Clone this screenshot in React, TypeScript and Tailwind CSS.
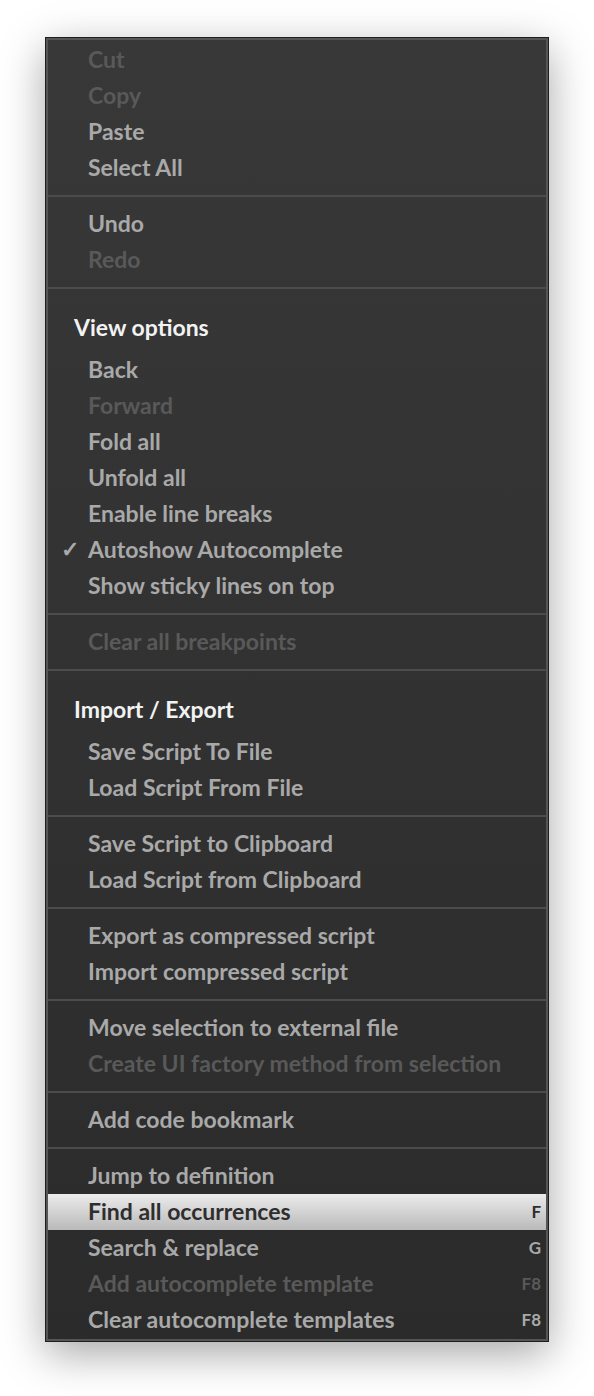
import React from "react";

type Item =
  | { kind: "item"; label: string; disabled?: boolean; checked?: boolean; active?: boolean; shortcut?: string }
  | { kind: "header"; label: string }
  | { kind: "sep" };

const items: Item[] = [
  { kind: "item", label: "Cut", disabled: true },
  { kind: "item", label: "Copy", disabled: true },
  { kind: "item", label: "Paste" },
  { kind: "item", label: "Select All" },
  { kind: "sep" },
  { kind: "item", label: "Undo" },
  { kind: "item", label: "Redo", disabled: true },
  { kind: "sep" },
  { kind: "header", label: "View options" },
  { kind: "item", label: "Back" },
  { kind: "item", label: "Forward", disabled: true },
  { kind: "item", label: "Fold all" },
  { kind: "item", label: "Unfold all" },
  { kind: "item", label: "Enable line breaks" },
  { kind: "item", label: "Autoshow Autocomplete", checked: true },
  { kind: "item", label: "Show sticky lines on top" },
  { kind: "sep" },
  { kind: "item", label: "Clear all breakpoints", disabled: true },
  { kind: "sep" },
  { kind: "header", label: "Import / Export" },
  { kind: "item", label: "Save Script To File" },
  { kind: "item", label: "Load Script From File" },
  { kind: "sep" },
  { kind: "item", label: "Save Script to Clipboard" },
  { kind: "item", label: "Load Script from Clipboard" },
  { kind: "sep" },
  { kind: "item", label: "Export as compressed script" },
  { kind: "item", label: "Import compressed script" },
  { kind: "sep" },
  { kind: "item", label: "Move selection to external file" },
  { kind: "item", label: "Create UI factory method from selection", disabled: true },
  { kind: "sep" },
  { kind: "item", label: "Add code bookmark" },
  { kind: "sep" },
  { kind: "item", label: "Jump to definition" },
  { kind: "item", label: "Find all occurrences", active: true, shortcut: "F" },
  { kind: "item", label: "Search & replace", shortcut: "G" },
  { kind: "item", label: "Add autocomplete template", disabled: true, shortcut: "F8" },
  { kind: "item", label: "Clear autocomplete templates", shortcut: "F8" },
];

function Row({ item }: { item: Item }) {
  if (item.kind === "sep") {
    return <div className="h-[2px] bg-[#4c4c4c] my-[9px]" />;
  }
  if (item.kind === "header") {
    return (
      <div className="h-[54px] flex items-end pb-[7px] pl-[26px] text-[23px] font-bold text-[#f2f2f2] leading-none">
        <span className="h-[36px] flex items-center">{item.label}</span>
      </div>
    );
  }
  const color = item.active
    ? "text-[#2e2e2e]"
    : item.disabled
      ? "text-[#595959]"
      : "text-[#a9a9a9]";
  return (
    <div
      className={`relative h-[36px] flex items-center pl-[40px] pr-[5px] pb-[2px] text-[23px] font-bold leading-none ${color} ${
        item.active ? "bg-gradient-to-b from-[#ececec] to-[#b9b9b9]" : ""
      }`}
    >
      {item.checked && (
        <span className="absolute left-[13px] text-[22px] font-bold">✓</span>
      )}
      <span className="flex-1">{item.label}</span>
      {item.shortcut && <span className="text-[17px]">{item.shortcut}</span>}
    </div>
  );
}

export default function App() {
  return (
    <div className="w-[594px] h-[1396px] bg-white pt-[37px] pl-[45px] font-['Lato',sans-serif]">
      <div className="w-[504px] border border-[#1e1e1e] shadow-[0_12px_40px_rgba(0,0,0,0.35)]">
        <div className="border-2 border-[#555555] bg-gradient-to-b from-[#383838] to-[#2b2b2b] pt-[2px] pb-[1px]">
          {items.map((it, i) => (
            <Row key={i} item={it} />
          ))}
        </div>
      </div>
    </div>
  );
}
